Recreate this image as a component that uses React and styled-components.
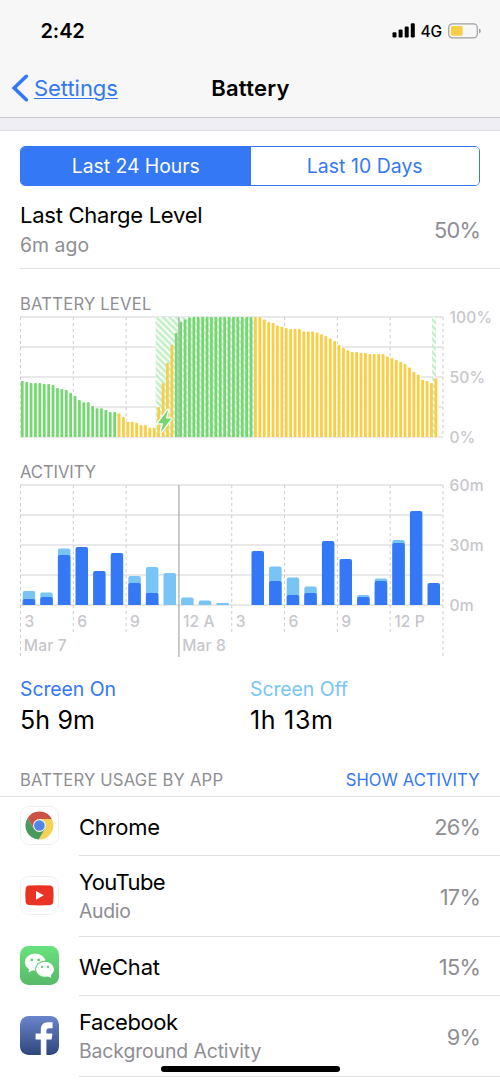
import React from "react";
import styled, { createGlobalStyle } from "styled-components";

const blue = "#3478f6";
const lightBlue = "#78c5f5";
const green = "#76d672";
const yellow = "#f7ce46";
const gray = "#8e8e93";

const GlobalStyle = createGlobalStyle`
  * {
    box-sizing: border-box;
  }
  body {
    margin: 0;
    background-color: #fff;
    font-family: Inter, "Liberation Sans", sans-serif;
    color: #000;
  }
`;

const Phone = styled.div`
  width: 500px;
  height: 1083px;
  position: relative;
  overflow: hidden;
  background-color: #fff;
`;

const Header = styled.header`
  background-color: #f7f7f7;
  border-bottom: 1px solid #c9c8cd;
`;

const StatusBar = styled.div`
  height: 61px;
  padding: 0 19px 0 40.5px;
  display: flex;
  align-items: center;
  justify-content: space-between;
`;

const Time = styled.span`
  font-size: 20px;
  font-weight: 600;
  letter-spacing: -0.1px;
`;

const StatusIcons = styled.div`
  display: flex;
  align-items: center;
`;

const Network = styled.span`
  margin: 1px 6px 0 5px;
  font-size: 15.5px;
  font-weight: 500;
  letter-spacing: -0.17px;
`;

const NavBar = styled.nav`
  height: 56px;
  padding: 0 10px 2px 11px;
  display: grid;
  grid-template-columns: 1fr auto 1fr;
  align-items: center;
`;

const BackLink = styled.a`
  display: flex;
  align-items: center;
  gap: 5px;
  color: ${blue};
  font-size: 22px;
  letter-spacing: -0.05px;
  cursor: pointer;

  span {
    text-decoration: underline;
    text-decoration-thickness: 1px;
    text-underline-offset: 2px;
  }
`;

const Title = styled.h1`
  margin: 0;
  font-size: 22px;
  font-weight: 600;
  letter-spacing: 0.25px;
`;

const Band = styled.div`
  height: 13px;
  background-color: #efeef4;
  border-bottom: 1px solid #dddce1;
`;

const Segmented = styled.div`
  height: 40px;
  margin: 15px 20px 0;
  display: flex;
  border: 1px solid ${blue};
  border-radius: 5px;
  overflow: hidden;
`;

const Segment = styled.button`
  flex: ${(props) => (props.$active ? "0 0 229.5px" : 1)};
  padding: 0;
  border: none;
  background-color: ${(props) => (props.$active ? blue : "#fff")};
  color: ${(props) => (props.$active ? "#fff" : blue)};
  font-family: inherit;
  font-size: 19.4px;
  letter-spacing: ${(props) => (props.$active ? -0.05 : 0.05)}px;
  cursor: pointer;
`;

const ChargeRow = styled.section`
  height: 83px;
  margin-left: 20px;
  padding: 13px 20px 8px 0;
  display: flex;
  align-items: center;
  justify-content: space-between;
  border-bottom: 1px solid #e0e0e2;
`;

const Name = styled.div`
  font-size: 22px;
  line-height: 30px;
  letter-spacing: ${(props) => props.$spacing || 0}px;
`;

const Detail = styled.div`
  font-size: 19.4px;
  line-height: ${(props) => props.$line || 29}px;
  letter-spacing: ${(props) => props.$spacing || 0}px;
  color: ${gray};
`;

const Percent = styled.div`
  font-size: 21.8px;
  letter-spacing: -0.8px;
  color: ${gray};
`;

const ChartHeading = styled.h2`
  height: 20px;
  margin: ${(props) => props.$top}px 0 0 20px;
  font-size: 16.6px;
  line-height: 22px;
  font-weight: 400;
  letter-spacing: ${(props) => props.$spacing}px;
  color: ${gray};
`;

const Chart = styled.svg`
  display: block;
  width: 500px;
  height: ${(props) => props.$height}px;
  overflow: visible;
`;

const AxisText = styled.text`
  font-size: 15.6px;
  font-weight: 500;
  letter-spacing: 0.15px;
  fill: #c7c7cb;
`;

const Totals = styled.section`
  height: 62px;
  margin: 16px 20px 0;
  display: grid;
  grid-template-columns: 1fr 1fr;
`;

const TotalLabel = styled.div`
  font-size: 19.4px;
  line-height: 25px;
  letter-spacing: -0.05px;
  color: ${(props) => props.$color};
`;

const TotalValue = styled.div`
  font-size: 25px;
  line-height: 36px;
  letter-spacing: ${(props) => props.$spacing}px;
`;

const UsageHeader = styled.div`
  height: 58px;
  padding: 24px 20.5px 0 20px;
  display: flex;
  align-items: center;
  justify-content: space-between;
  border-bottom: 1px solid #e0e0e2;
  font-size: 16.6px;
  color: ${gray};
`;

const UsageTitle = styled.span`
  letter-spacing: 0.22px;
`;

const ShowActivity = styled.span`
  letter-spacing: 0.05px;
  color: ${blue};
  cursor: pointer;
`;

const AppRow = styled.div`
  height: ${(props) => (props.$tall ? 81 : 59)}px;
  padding-left: 20px;
  display: flex;
  align-items: center;
`;

const AppInfo = styled.div`
  flex: 1;
  align-self: stretch;
  margin-left: 20px;
  padding: 1px 20px 0 0;
  display: flex;
  align-items: center;
  justify-content: space-between;
  border-bottom: 1px solid #e0e0e2;
`;

const AppIcon = styled.svg`
  display: block;
  width: 39px;
  height: 39px;
  margin-bottom: 2px;
`;

const HomeIndicator = styled.div`
  position: absolute;
  left: 161px;
  bottom: 11px;
  width: 179px;
  height: 6px;
  border-radius: 3px;
  background-color: #000;
`;

// battery percentage, one value per quarter hour
const levels = [
  46.7, 45.8, 45, 45, 45, 44.2, 44.2, 43.3, 40.8, 40, 39.2, 36.7, 34.2, 30.8,
  28.9, 28.9, 25.8, 23.9, 23.9, 22.5, 20.8, 20.8, 19.7, 16.7, 12.8, 12.8, 11.9,
  10, 10, 7.8, 7.8, 25, 45, 61.7, 76.7, 86.7, 95.8, 98, 99.4, 100, 100, 100,
  100, 100, 100, 100, 100, 100, 100, 100, 100, 100, 100, 100, 100, 98, 95.8,
  95, 93, 91.9, 90.8, 90, 90, 90, 88, 88, 88, 87, 85.6, 84.2, 82, 80, 76.7,
  74.2, 72.2, 70.8, 70.8, 70, 70, 69.2, 69.2, 69.2, 69.2, 67, 65.8, 64.2, 62.8,
  60.8, 58, 54.2, 51.9, 47.8, 46.7, 45, 48.9,
];

// minutes per hour: [total, screen on]
const activity = [
  [7, 3], [6.2, 4], [28.3, 25], [29, 29], [17, 17], [26, 26], [14.5, 11],
  [19, 6], [16, 0], [3.8, 0], [2.2, 0], [1, 0], [0, 0], [27, 27], [19.3, 12],
  [13.8, 5], [9.3, 6], [32, 32], [23, 23], [5, 4], [13.3, 12], [32.5, 31],
  [47, 47], [11, 11],
];

const hours = ["3", "6", "9", "12 A", "3", "6", "9", "12 P"];

const LEFT = 20.5;
const RIGHT = 443;
const HOUR = 17.6;
const gridX = (i) => LEFT + i * 52.81;

const barPath = (x, y, w, bottom, r) =>
  `M${x} ${bottom}V${y + r}Q${x} ${y} ${x + r} ${y}H${x + w - r}Q${x + w} ${y} ${x + w} ${y + r}V${bottom}Z`;

const isGreen = (i) => i < 22 || (i > 34 && i < 53);
const isCharging = (i) => i > 30 && i < 53;

const HorizontalLines = ({ top }) =>
  [0, 30, 60, 90, 120].map((y) => (
    <line key={y} x1={LEFT - 0.5} x2={RIGHT} y1={top + y} y2={top + y} stroke="#e2e2e4" strokeWidth="1.6" />
  ));

const BatteryChart = () => (
  <Chart $height={148} viewBox="0 313 500 148">
    <defs>
      <pattern id="hatch" width="4.6" height="4.6" patternUnits="userSpaceOnUse" patternTransform="rotate(-45)">
        <rect width="4.6" height="4.6" fill="#fff" />
        <rect width="2.9" height="4.6" fill="#c8f0ca" />
      </pattern>
    </defs>
    <HorizontalLines top={317} />
    {[0, 1, 2, 5, 6, 7, 8].map((i) => (
      <line key={i} x1={gridX(i)} x2={gridX(i)} y1="317" y2="437" stroke="#cdcdd0" strokeDasharray="3.2 2.8" />
    ))}
    {levels.map((v, i) =>
      isCharging(i) ? null : (
        <rect
          key={i}
          x={20.6 + i * 4.4}
          y={437 - v * 1.2 + 0.5}
          width="4.4"
          height={v * 1.2 - 0.5}
          fill={isGreen(i) ? "#f1fbf0" : "#fef9e8"}
        />
      )
    )}
    <rect x="155.7" y="317" width="98" height="120" fill="url(#hatch)" />
    <rect x="432" y="317" width="4" height="120" fill="url(#hatch)" />
    <line x1={gridX(3)} x2={gridX(3)} y1="317" y2="437" stroke="#9a9a9e" />
    {levels.map((v, i) => (
      <path
        key={i}
        d={barPath(20.9 + i * 4.4, 437 - v * 1.2, 2.7, 437, 0.9)}
        fill={isGreen(i) ? green : yellow}
      />
    ))}
    <path
      d="M168.2 409.6L157.8 423.2H163.2L160.8 432.4L171.4 418.6H165.8Z"
      fill={green}
      stroke="#fff"
      strokeWidth="2.4"
      strokeLinejoin="round"
      paintOrder="stroke"
    />
    <AxisText x="449.5" y="322.6">100%</AxisText>
    <AxisText x="449.5" y="382.6">50%</AxisText>
    <AxisText x="449.5" y="442.6">0%</AxisText>
  </Chart>
);

const ActivityChart = () => (
  <Chart $height={180} viewBox="0 481 500 180">
    <HorizontalLines top={485} />
    {[0, 1, 2, 4, 5, 6, 7, 8].map((i) => (
      <line
        key={i}
        x1={gridX(i)}
        x2={gridX(i)}
        y1="485"
        y2={i % 8 === 0 ? 657 : 635}
        stroke="#cdcdd0"
        strokeDasharray="3.2 2.8"
      />
    ))}
    {activity.map(([total, on], i) => (
      <g key={i}>
        {total > on && <path d={barPath(22.7 + i * HOUR, 605 - total * 2, 12.5, 605, Math.min(2, total))} fill={lightBlue} />}
        {on > 0 && <path d={barPath(22.7 + i * HOUR, 605 - on * 2, 12.5, 605, 2)} fill={blue} />}
      </g>
    ))}
    <line x1={gridX(3)} x2={gridX(3)} y1="485" y2="657" stroke="#98989c" />
    {hours.map((h, i) => (
      <AxisText key={i} x={gridX(i) + 4} y="627">{h}</AxisText>
    ))}
    <AxisText x={gridX(0) + 3.3} y="651.4">Mar 7</AxisText>
    <AxisText x={gridX(3) + 3.3} y="651.4">Mar 8</AxisText>
    <AxisText x="449.5" y="490.6">60m</AxisText>
    <AxisText x="449.5" y="550.6">30m</AxisText>
    <AxisText x="449.5" y="610.6">0m</AxisText>
  </Chart>
);

const ChromeIcon = () => (
  <AppIcon viewBox="0 0 39 39">
    <rect x="0.5" y="0.5" width="38" height="38" rx="8.5" fill="#fff" stroke="#f0f0f2" />
    <g transform="translate(19.4 19.5)">
      <path d="M-11.77-7.58A14 14 0 0 1 12.45-6.4H0L0 0L-5.54 3.2Z" fill="#cb5244" />
      <path d="M12.45-6.4A14 14 0 0 1-.68 13.98L5.54 3.2L0 0V-6.4Z" fill="#f7d155" />
      <path d="M-.68 13.98A14 14 0 0 1-11.77-7.58L-5.54 3.2L0 0L5.54 3.2Z" fill="#459a5d" />
      <circle r="6.4" fill="#f4f4f4" />
      <circle r="5.3" fill="#5185ec" />
    </g>
  </AppIcon>
);

const YouTubeIcon = () => (
  <AppIcon viewBox="0 0 39 39">
    <rect x="0.5" y="0.5" width="38" height="38" rx="8.5" fill="#fff" stroke="#f0f0f2" />
    <path
      d="M9 9.6Q19.4 8.8 30 9.6Q33 9.8 33.3 13Q33.9 19.3 33.3 25.7Q33 28.8 30 29Q19.4 29.8 9 29Q6 28.8 5.6 25.7Q5 19.3 5.6 13Q6 9.8 9 9.6Z"
      fill="#ea3323"
    />
    <path d="M16 14.9V23.7L23.7 19.3Z" fill="#fff" />
  </AppIcon>
);

const WeChatIcon = () => (
  <AppIcon viewBox="0 0 39 39">
    <defs>
      <linearGradient id="wechat" x2="0" y2="1">
        <stop stopColor="#68e27d" />
        <stop offset="1" stopColor="#58b968" />
      </linearGradient>
    </defs>
    <rect width="39" height="39" rx="8.5" fill="url(#wechat)" />
    <ellipse cx="15.2" cy="16.2" rx="10.3" ry="8.6" fill="#fff" />
    <path d="M9.5 22L8.3 26.4L13.2 23.8Z" fill="#fff" />
    <ellipse cx="25" cy="23.2" rx="9.9" ry="8.4" fill="#5fcd71" />
    <ellipse cx="25" cy="23.2" rx="9" ry="7.5" fill="#fff" />
    <path d="M31 28L31.2 31.8L26.6 30Z" fill="#fff" />
    <circle cx="11.8" cy="13.9" r="1.4" fill="#60cf72" />
    <circle cx="18.7" cy="13.9" r="1.4" fill="#60cf72" />
    <circle cx="22" cy="20.9" r="1.2" fill="#60cf72" />
    <circle cx="28" cy="20.9" r="1.2" fill="#60cf72" />
  </AppIcon>
);

const FacebookIcon = () => (
  <AppIcon viewBox="0 0 39 39">
    <defs>
      <linearGradient id="facebook" x2="0" y2="1">
        <stop stopColor="#6a86cb" />
        <stop offset="1" stopColor="#2e467d" />
      </linearGradient>
    </defs>
    <rect width="39" height="39" rx="8.5" fill="url(#facebook)" />
    <path
      d="M20.8 39V23.6H15.6V17.4H20.8V14C20.8 9 23.5 6.3 28 6.3H32.6V12.2H29.4C27.2 12.2 26.4 13.2 26.4 15V17.4H32.4L31.6 23.6H26.4V39Z"
      fill="#fff"
    />
  </AppIcon>
);

const apps = [
  { name: "Chrome", percent: 26, icon: <ChromeIcon />, spacing: -0.25 },
  { name: "YouTube", detail: "Audio", percent: 17, icon: <YouTubeIcon />, spacing: -0.6, detailSpacing: -0.3 },
  { name: "WeChat", percent: 15, icon: <WeChatIcon />, spacing: -0.2 },
  { name: "Facebook", detail: "Background Activity", percent: 9, icon: <FacebookIcon />, spacing: -0.42, detailSpacing: -0.11 },
];

const App = () => {
  return (
    <Phone>
      <GlobalStyle />
      <Header>
        <StatusBar>
          <Time>2:42</Time>
          <StatusIcons>
            <svg width="24" height="15" viewBox="0 0 24 15">
              <rect x="0.5" y="9.2" width="4" height="5.3" rx="1.2" />
              <rect x="6.6" y="6.5" width="4" height="8" rx="1.2" />
              <rect x="12.7" y="3.5" width="4" height="11" rx="1.2" />
              <rect x="18.8" y="0.3" width="4" height="14.2" rx="1.2" />
            </svg>
            <Network>4G</Network>
            <svg width="33" height="16" viewBox="0 0 33 16">
              <rect x="0.7" y="0.9" width="28.6" height="14" rx="3.8" fill="none" stroke="#a0a0a0" strokeWidth="1.2" />
              <rect x="2.9" y="3.1" width="11.8" height="9.6" rx="1.6" fill={yellow} />
              <path d="M31 5.4Q32.8 6.3 32.8 7.9Q32.8 9.5 31 10.4Z" fill="#a0a0a0" />
            </svg>
          </StatusIcons>
        </StatusBar>
        <NavBar>
          <BackLink>
            <svg width="18" height="28" viewBox="0 0 18 28">
              <path d="M15.3 2.3L3.2 14L15.3 25.7" fill="none" stroke={blue} strokeWidth="3.6" strokeLinecap="round" />
            </svg>
            <span>Settings</span>
          </BackLink>
          <Title>Battery</Title>
        </NavBar>
      </Header>
      <Band />

      <Segmented>
        <Segment $active>Last 24 Hours</Segment>
        <Segment>Last 10 Days</Segment>
      </Segmented>

      <ChargeRow>
        <div>
          <Name $spacing={-0.25}>Last Charge Level</Name>
          <Detail $spacing={0.05} $line={30}>6m ago</Detail>
        </div>
        <Percent>50%</Percent>
      </ChargeRow>

      <ChartHeading $top={24} $spacing={0.22}>BATTERY LEVEL</ChartHeading>
      <BatteryChart />
      <ChartHeading $top={0} $spacing={-0.05}>ACTIVITY</ChartHeading>
      <ActivityChart />

      <Totals>
        <div>
          <TotalLabel $color={blue}>Screen On</TotalLabel>
          <TotalValue $spacing={0.15}>5h 9m</TotalValue>
        </div>
        <div>
          <TotalLabel $color={lightBlue}>Screen Off</TotalLabel>
          <TotalValue $spacing={0.7}>1h 13m</TotalValue>
        </div>
      </Totals>

      <UsageHeader>
        <UsageTitle>BATTERY USAGE BY APP</UsageTitle>
        <ShowActivity>SHOW ACTIVITY</ShowActivity>
      </UsageHeader>
      {apps.map((app) => (
        <AppRow key={app.name} $tall={Boolean(app.detail)}>
          {app.icon}
          <AppInfo>
            <div>
              <Name $spacing={app.spacing}>{app.name}</Name>
              {app.detail && <Detail $spacing={app.detailSpacing}>{app.detail}</Detail>}
            </div>
            <Percent>{app.percent}%</Percent>
          </AppInfo>
        </AppRow>
      ))}
      <HomeIndicator />
    </Phone>
  );
};
export default App;
